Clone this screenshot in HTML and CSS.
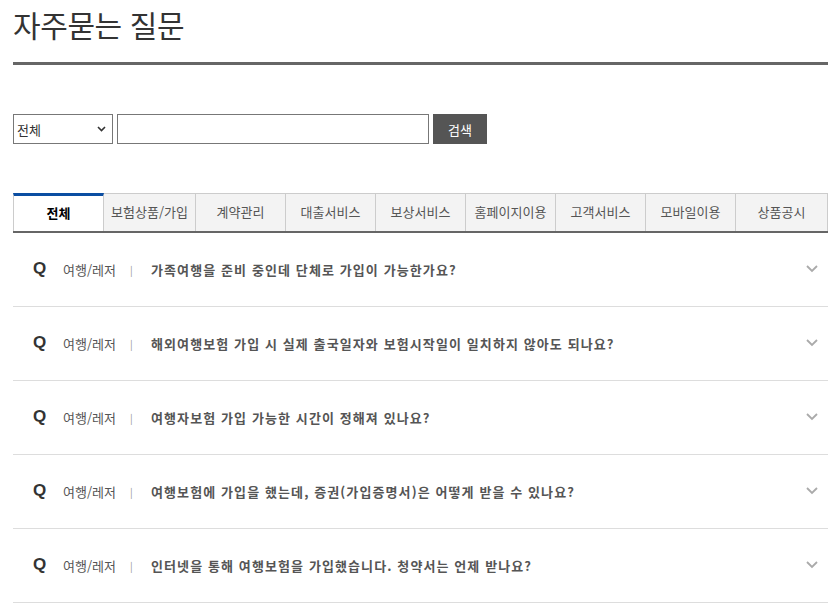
FILE: index.html
```html
<!DOCTYPE html>
<html lang="ko">
<head>
<meta charset="utf-8">
<title>자주묻는 질문</title>
<link rel="stylesheet" href="styles.css">
</head>
<body>
<div class="page">
  <h1 class="title">자주묻는 질문</h1>
  <div class="search">
    <div class="select">
      <span>전체</span>
      <svg class="sel-arrow" width="9" height="6" viewBox="0 0 9 6"><polyline points="1,1 4.5,4.5 8,1" fill="none" stroke="#333" stroke-width="1.6"/></svg>
    </div>
    <div class="input"></div>
    <button class="btn">검색</button>
  </div>
  <ul class="tabs">
    <li class="tab active">전체</li>
    <li class="tab">보험상품/가입</li>
    <li class="tab">계약관리</li>
    <li class="tab">대출서비스</li>
    <li class="tab">보상서비스</li>
    <li class="tab">홈페이지이용</li>
    <li class="tab">고객서비스</li>
    <li class="tab">모바일이용</li>
    <li class="tab">상품공시</li>
  </ul>
  <ul class="faq">
    <li class="row"><span class="q">Q</span><span class="cat">여행/레저</span><span class="sep">|</span><span class="question">가족여행을 준비 중인데 단체로 가입이 가능한가요?</span><svg class="chev" width="12" height="8" viewBox="0 0 12 8"><polyline points="1,1 6,6 11,1" fill="none" stroke="#aaa" stroke-width="1.8"/></svg></li>
    <li class="row"><span class="q">Q</span><span class="cat">여행/레저</span><span class="sep">|</span><span class="question">해외여행보험 가입 시 실제 출국일자와 보험시작일이 일치하지 않아도 되나요?</span><svg class="chev" width="12" height="8" viewBox="0 0 12 8"><polyline points="1,1 6,6 11,1" fill="none" stroke="#aaa" stroke-width="1.8"/></svg></li>
    <li class="row"><span class="q">Q</span><span class="cat">여행/레저</span><span class="sep">|</span><span class="question">여행자보험 가입 가능한 시간이 정해져 있나요?</span><svg class="chev" width="12" height="8" viewBox="0 0 12 8"><polyline points="1,1 6,6 11,1" fill="none" stroke="#aaa" stroke-width="1.8"/></svg></li>
    <li class="row"><span class="q">Q</span><span class="cat">여행/레저</span><span class="sep">|</span><span class="question">여행보험에 가입을 했는데, 증권(가입증명서)은 어떻게 받을 수 있나요?</span><svg class="chev" width="12" height="8" viewBox="0 0 12 8"><polyline points="1,1 6,6 11,1" fill="none" stroke="#aaa" stroke-width="1.8"/></svg></li>
    <li class="row"><span class="q">Q</span><span class="cat">여행/레저</span><span class="sep">|</span><span class="question">인터넷을 통해 여행보험을 가입했습니다. 청약서는 언제 받나요?</span><svg class="chev" width="12" height="8" viewBox="0 0 12 8"><polyline points="1,1 6,6 11,1" fill="none" stroke="#aaa" stroke-width="1.8"/></svg></li>
  </ul>
</div>
</body>
</html>
```
FILE: styles.css
```css
* { box-sizing: border-box; }
body {
  margin: 0;
  background: #fff;
  font-family: "Noto Sans CJK KR", "Noto Sans", sans-serif;
  color: #333;
}
.page {
  width: 815px;
  margin-left: 13px;
}
.title {
  margin: 0;
  padding-top: 4px;
  height: 65px;
  font-size: 30px;
  font-weight: 400;
  line-height: 40px;
  letter-spacing: -0.4px;
  color: #333;
  border-bottom: 3px solid #666;
}
.search {
  display: flex;
  gap: 4px;
  margin-top: 49px;
  height: 30px;
}
.select {
  width: 100px;
  height: 30px;
  border: 1px solid #777;
  display: flex;
  align-items: center;
  justify-content: space-between;
  padding: 0 6px 0 3px;
  font-size: 13px;
  color: #333;
}
.input {
  width: 312px;
  height: 30px;
  border: 1px solid #777;
}
.btn {
  width: 54px;
  height: 30px;
  border: 0;
  background: #555;
  color: #fff;
  font-family: inherit;
  font-size: 13px;
  padding: 0;
}
.tabs {
  list-style: none;
  margin: 49px 0 0;
  padding: 0;
  display: grid;
  grid-template-columns: 91px 92px 90px 90px 90px 90px 90px 90px 92px;
  border-bottom: 2px solid #666;
}
.tab {
  height: 38px;
  border: 1px solid #ccc;
  border-left: 0;
  border-bottom: 0;
  background: #f3f3f3;
  display: flex;
  align-items: center;
  justify-content: center;
  font-size: 13px;
  color: #555;
  padding-bottom: 3px;
}
.tab.active {
  background: #fff;
  border-top: 3px solid #0b4ea2;
  border-left: 1px solid #ccc;
  color: #000;
  font-weight: 700;
  padding-bottom: 2px;
}
.faq {
  list-style: none;
  margin: 0;
  padding: 0;
}
.row {
  height: 74px;
  border-bottom: 1px solid #ddd;
  display: flex;
  align-items: center;
  padding-left: 20px;
  padding-right: 10px;
  padding-bottom: 1px;
}
.q {
  width: 30px;
  font-family: "Liberation Sans", Arial, sans-serif;
  font-size: 17px;
  font-weight: 700;
  color: #333;
}
.cat {
  width: 67px;
  font-size: 13px;
  color: #555;
}
.sep {
  width: 21px;
  font-size: 10px;
  color: #999;
}
.question {
  flex: 1;
  font-size: 13px;
  font-weight: 700;
  color: #555;
  letter-spacing: 1.1px;
}
.chev {
  flex: none;
}
```
